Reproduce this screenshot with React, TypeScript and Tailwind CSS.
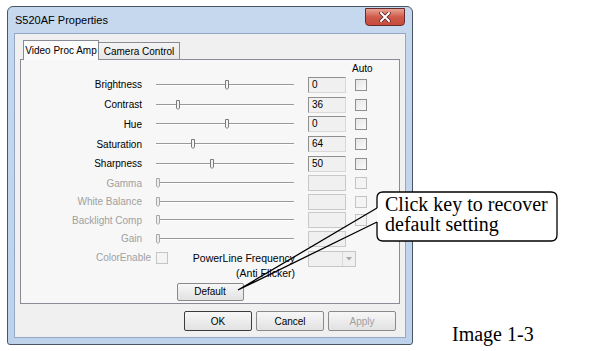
const ui = { fontFamily: '"Liberation Sans", Arial, sans-serif' };
const serif = { fontFamily: '"Liberation Serif", "Times New Roman", serif' };

const enabledRows = [
  { label: 'Brightness', pos: 71, value: '0' },
  { label: 'Contrast', pos: 22, value: '36' },
  { label: 'Hue', pos: 71, value: '0' },
  { label: 'Saturation', pos: 37, value: '64' },
  { label: 'Sharpness', pos: 56, value: '50' },
];

const disabledRows = [
  { label: 'Gamma', box: true },
  { label: 'White Balance', box: true },
  { label: 'Backlight Comp', box: true },
  { label: 'Gain', box: false },
];

function Thumb({ pos, disabled }: { pos: number; disabled?: boolean }) {
  return (
    <svg
      className="absolute top-[1px]"
      style={{ left: pos - 2 }}
      width="5"
      height="10"
      viewBox="0 0 5 10"
    >
      <path
        d="M0.5 0.5 H3.5 V8 L2 9.5 L0.5 8 Z"
        fill={disabled ? '#ededed' : '#f4f4f4'}
        stroke={disabled ? '#a8a8a8' : '#7a7a7a'}
      />
    </svg>
  );
}

function Slider({ pos, disabled }: { pos: number; disabled?: boolean }) {
  return (
    <div className="relative w-[138px] h-[12px] flex items-center">
      <div className="w-full h-[2px] border-t border-[#9a9a9a] border-b border-b-white" />
      <Thumb pos={pos} disabled={disabled} />
    </div>
  );
}

function CheckBox({ disabled }: { disabled?: boolean }) {
  return (
    <div
      className={
        disabled
          ? 'w-[12px] h-[12px] border border-[#c4c4c4] bg-[#f4f4f4]'
          : 'w-[12px] h-[12px] border border-[#8e8f8f] bg-gradient-to-br from-[#e6e6e6] to-[#fbfbfb]'
      }
    />
  );
}

function ValueBox({ value, disabled }: { value?: string; disabled?: boolean }) {
  return (
    <div
      className={
        disabled
          ? 'w-[38px] h-[16px] border border-[#c9c9c9] bg-[#f0f0f0]'
          : 'w-[38px] h-[16px] border border-[#8f8f8f] border-b-[#d8d8d8] border-r-[#d8d8d8] bg-[#f0f0f0] text-[10px] leading-[14px] pl-[3px] text-black'
      }
    >
      {value}
    </div>
  );
}

function WinButton({ label, primary, disabled }: { label: string; primary?: boolean; disabled?: boolean }) {
  return (
    <div
      className={
        'w-[68px] h-[20px] rounded-[2px] border bg-gradient-to-b from-[#f7f7f7] to-[#e2e2e2] flex items-center justify-center text-[10px] ' +
        (primary ? 'border-[#3c3c3c] ' : 'border-[#8a8a8a] ') +
        (disabled ? 'text-[#a0a0a0]' : 'text-black')
      }
    >
      {label}
    </div>
  );
}

export default function App() {
  return (
    <div className="relative w-[615px] h-[351px] bg-white flex overflow-hidden" style={ui}>
      {/* window frame */}
      <div className="mt-[6px] ml-[7px] w-[406px] h-[339px] rounded-t-[6px] rounded-b-[3px] border border-[#4a5563] bg-gradient-to-b from-[#c6d8ee] to-[#bed2ec] flex flex-col px-[6px] pb-[6px]">
        <div className="h-[26px] flex items-start justify-between">
          <span className="mt-[7px] ml-[1px] text-[11px] leading-[13px] text-black">S520AF Properties</span>
          <div className="w-[40px] h-[18px] mt-[1px] mr-[1px] rounded-b-[4px] border border-[#6b2a2a] bg-gradient-to-b from-[#e8a393] via-[#cf5a4a] to-[#c84a3c] flex items-center justify-center">
            <svg width="12" height="10" viewBox="0 0 12 10">
              <path d="M2 1 L10 9 M10 1 L2 9" stroke="#5a2424" strokeWidth="3.6" strokeLinecap="square" />
              <path d="M2 1 L10 9 M10 1 L2 9" stroke="#ffffff" strokeWidth="2" strokeLinecap="square" />
            </svg>
          </div>
        </div>

        {/* client area */}
        <div className="flex-1 bg-[#f0f0f0] border border-[#93a8c4] flex flex-col px-[5px] pt-[5px]">
          {/* tabs */}
          <div className="h-[20px] flex items-end pl-[3px]">
            <div className="h-[20px] w-[76px] border border-b-0 border-[#898c95] bg-[#fbfbfb] flex items-center justify-center text-[10px] text-black -mb-px relative z-10">
              Video Proc Amp
            </div>
            <div className="h-[17px] w-[81px] border border-l-0 border-b-0 border-[#898c95] bg-gradient-to-b from-[#f4f4f4] to-[#e6e6e6] flex items-center justify-center text-[10px] text-black">
              Camera Control
            </div>
          </div>

          {/* tab panel */}
          <div className="h-[245px] border border-[#898c95] bg-[#f7f7f7] flex flex-col pt-[3px]">
            <div className="h-[12px] flex">
              <span className="ml-[331px] text-[10px] leading-[12px] text-black">Auto</span>
            </div>

            {enabledRows.map((r) => (
              <div key={r.label} className="h-[19.75px] flex items-center">
                <span className="w-[121px] text-right text-[10px] text-black">{r.label}</span>
                <div className="ml-[14px]">
                  <Slider pos={r.pos} />
                </div>
                <div className="ml-[14px]">
                  <ValueBox value={r.value} />
                </div>
                <div className="ml-[9px]">
                  <CheckBox />
                </div>
              </div>
            ))}

            {disabledRows.map((r) => (
              <div key={r.label} className="h-[18.5px] flex items-center">
                <span className="w-[121px] text-right text-[10px] text-[#a0a0a0]">{r.label}</span>
                <div className="ml-[14px]">
                  <Slider pos={2} disabled />
                </div>
                <div className="ml-[14px]">
                  <ValueBox disabled />
                </div>
                {r.box && (
                  <div className="ml-[9px]">
                    <CheckBox disabled />
                  </div>
                )}
              </div>
            ))}

            {/* color enable + powerline */}
            <div className="h-[35px] flex items-start pt-[3px]">
              <span className="w-[130px] text-right text-[10px] leading-[14px] text-[#a0a0a0]">ColorEnable</span>
              <div className="ml-[5px] mt-[1px]">
                <CheckBox disabled />
              </div>
              <div className="ml-[22px] w-[105px] flex flex-col items-end text-[10.5px] leading-[15px] text-black whitespace-nowrap">
                <span>PowerLine Frequency</span>
                <span>(Anti Flicker)</span>
              </div>
              <div className="ml-[13px] w-[48px] h-[16px] border border-[#c6c6c6] bg-[#f0f0f0] flex justify-end">
                <div className="w-[13px] h-full border-l border-[#dadada] flex items-center justify-center">
                  <svg width="6" height="4" viewBox="0 0 6 4">
                    <path d="M0 0 H6 L3 3.5 Z" fill="#a8a8a8" />
                  </svg>
                </div>
              </div>
            </div>

            <div className="flex justify-center">
              <div className="w-[67px] h-[18px] rounded-[2px] border border-[#8a8a8a] bg-gradient-to-b from-[#f7f7f7] to-[#e2e2e2] flex items-center justify-center text-[10px] text-black">
                Default
              </div>
            </div>
          </div>

          {/* dialog buttons */}
          <div className="mt-[7px] flex justify-end gap-[4px] pr-[4px]">
            <WinButton label="OK" primary />
            <WinButton label="Cancel" />
            <WinButton label="Apply" disabled />
          </div>
        </div>
      </div>

      {/* caption */}
      <div className="flex-1 flex items-end pb-[7px] pl-[39px]">
        <span className="text-[20px] leading-[20px] text-black" style={serif}>
          Image 1-3
        </span>
      </div>

      {/* callout balloon */}
      <svg className="absolute left-0 top-0" width="615" height="351" viewBox="0 0 615 351">
        <rect x="377" y="192" width="180" height="49" rx="6" fill="#ffffff" />
        <path
          d="M377 222 L238 290 L377 208"
          fill="none"
          stroke="#000000"
          strokeWidth="1.3"
          strokeLinejoin="miter"
        />
        <path
          d="M377 208 V198 Q377 192 383 192 H551 Q557 192 557 198 V235 Q557 241 551 241 H383 Q377 241 377 235 V222"
          fill="none"
          stroke="#000000"
          strokeWidth="1.3"
        />
      </svg>
      <div className="absolute left-[385px] top-[194px] text-[20px] leading-[20px] text-black" style={serif}>
        Click key to recover
        <br />
        default setting
      </div>
    </div>
  );
}
